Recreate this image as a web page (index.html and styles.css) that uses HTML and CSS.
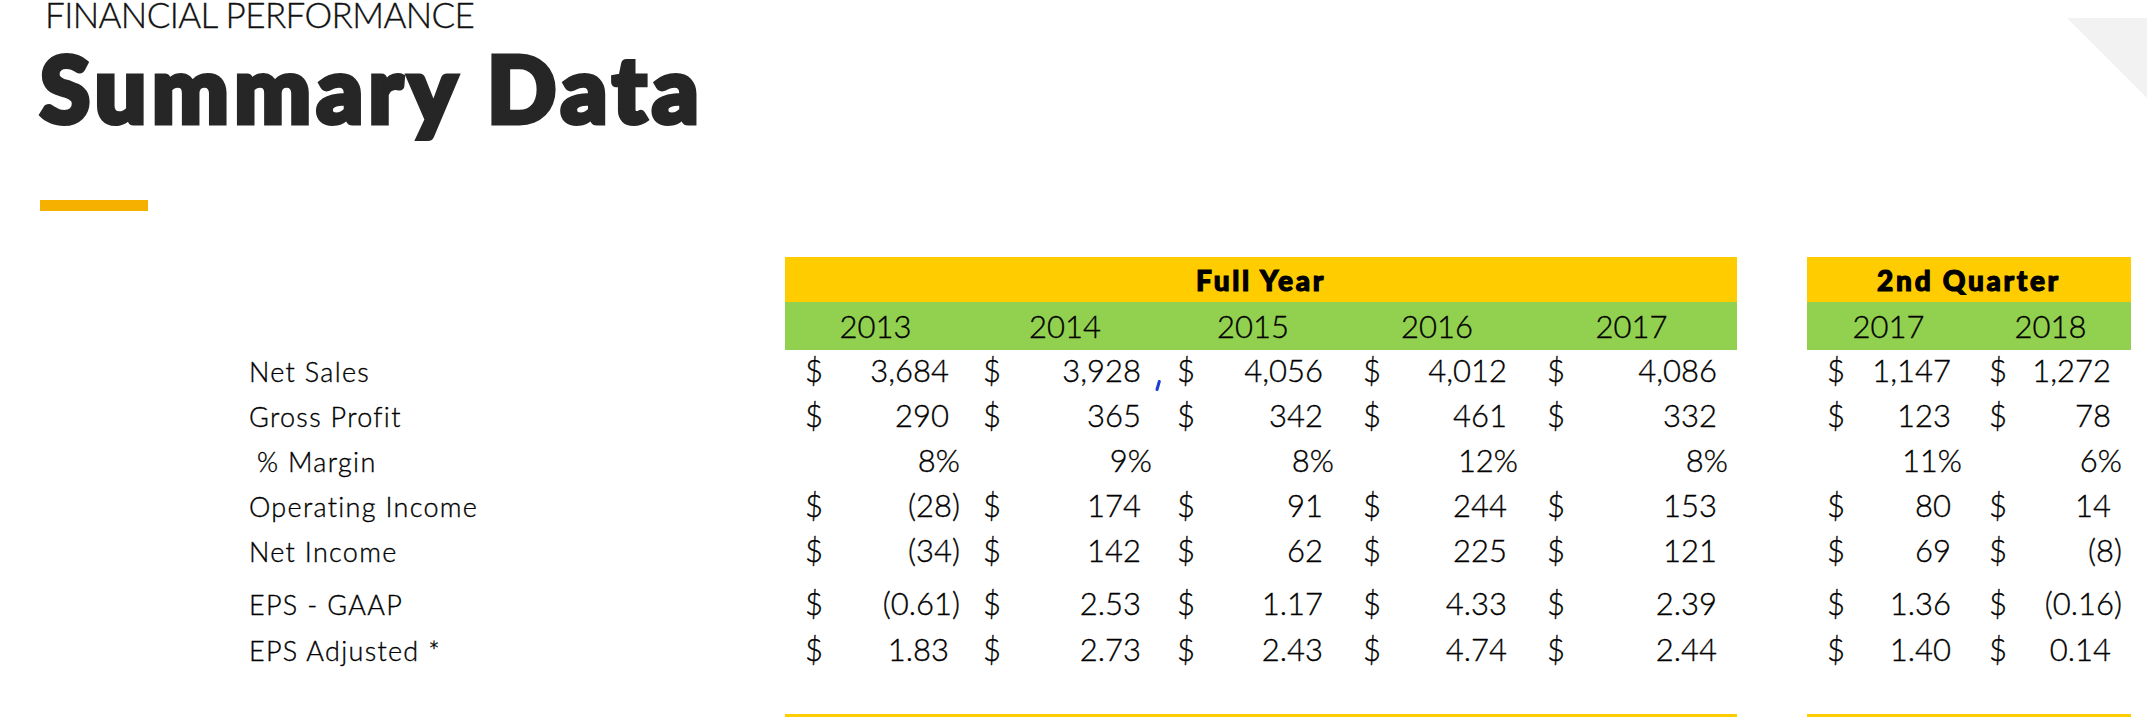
FILE: index.html
```html
<!DOCTYPE html>
<html lang="en">
<head>
<meta charset="utf-8">
<title>Summary Data</title>
<link rel="stylesheet" href="styles.css">
</head>
<body>
<div class="slide">
  <svg class="corner" viewBox="0 0 80 80" aria-hidden="true"><polygon points="0,0 80,0 80,80" fill="#f2f2f2"/></svg>
  <header class="head">
    <div class="kicker">FINANCIAL PERFORMANCE</div>
    <h1 class="title">Summary Data</h1>
    <div class="accent"></div>
  </header>

  <div class="table">
    <div class="labels">
      <div class="lab">Net Sales</div>
      <div class="lab">Gross Profit</div>
      <div class="lab indent">% Margin</div>
      <div class="lab">Operating Income</div>
      <div class="lab">Net Income</div>
      <div class="lab r6">EPS - GAAP</div>
      <div class="lab r7">EPS Adjusted *</div>
    </div>

    <div class="sec full">
      <div class="band-y">Full Year</div>
      <div class="band-g grid">
        <div class="yr">2013</div><div class="yr">2014</div><div class="yr">2015</div><div class="yr">2016</div><div class="yr">2017</div>
      </div>
      <div class="row grid">
        <div class="cell"><span>$</span><span class="pos">3,684</span></div>
        <div class="cell mark-host"><span>$</span><span class="pos">3,928</span><svg class="mark" viewBox="0 0 6 11" aria-hidden="true"><path d="M4.3 1.5 L2 9.5" stroke="#1d3fd6" stroke-width="3" stroke-linecap="round" fill="none"/></svg></div>
        <div class="cell"><span>$</span><span class="pos">4,056</span></div>
        <div class="cell"><span>$</span><span class="pos">4,012</span></div>
        <div class="cell"><span>$</span><span class="pos">4,086</span></div>
      </div>
      <div class="row grid">
        <div class="cell"><span>$</span><span class="pos">290</span></div>
        <div class="cell"><span>$</span><span class="pos">365</span></div>
        <div class="cell"><span>$</span><span class="pos">342</span></div>
        <div class="cell"><span>$</span><span class="pos">461</span></div>
        <div class="cell"><span>$</span><span class="pos">332</span></div>
      </div>
      <div class="row grid">
        <div class="cell pct"><span>8%</span></div>
        <div class="cell pct"><span>9%</span></div>
        <div class="cell pct"><span>8%</span></div>
        <div class="cell pct"><span>12%</span></div>
        <div class="cell pct"><span>8%</span></div>
      </div>
      <div class="row grid">
        <div class="cell"><span>$</span><span>(28)</span></div>
        <div class="cell"><span>$</span><span class="pos">174</span></div>
        <div class="cell"><span>$</span><span class="pos">91</span></div>
        <div class="cell"><span>$</span><span class="pos">244</span></div>
        <div class="cell"><span>$</span><span class="pos">153</span></div>
      </div>
      <div class="row grid">
        <div class="cell"><span>$</span><span>(34)</span></div>
        <div class="cell"><span>$</span><span class="pos">142</span></div>
        <div class="cell"><span>$</span><span class="pos">62</span></div>
        <div class="cell"><span>$</span><span class="pos">225</span></div>
        <div class="cell"><span>$</span><span class="pos">121</span></div>
      </div>
      <div class="row grid r6">
        <div class="cell"><span>$</span><span>(0.61)</span></div>
        <div class="cell"><span>$</span><span class="pos">2.53</span></div>
        <div class="cell"><span>$</span><span class="pos">1.17</span></div>
        <div class="cell"><span>$</span><span class="pos">4.33</span></div>
        <div class="cell"><span>$</span><span class="pos">2.39</span></div>
      </div>
      <div class="row grid r7">
        <div class="cell"><span>$</span><span class="pos">1.83</span></div>
        <div class="cell"><span>$</span><span class="pos">2.73</span></div>
        <div class="cell"><span>$</span><span class="pos">2.43</span></div>
        <div class="cell"><span>$</span><span class="pos">4.74</span></div>
        <div class="cell"><span>$</span><span class="pos">2.44</span></div>
      </div>
      <div class="foot"></div>
    </div>

    <div class="sec qtr">
      <div class="band-y">2nd Quarter</div>
      <div class="band-g grid">
        <div class="yr">2017</div><div class="yr">2018</div>
      </div>
      <div class="row grid">
        <div class="cell"><span>$</span><span class="pos">1,147</span></div>
        <div class="cell"><span>$</span><span class="pos">1,272</span></div>
      </div>
      <div class="row grid">
        <div class="cell"><span>$</span><span class="pos">123</span></div>
        <div class="cell"><span>$</span><span class="pos">78</span></div>
      </div>
      <div class="row grid">
        <div class="cell pct"><span>11%</span></div>
        <div class="cell pct"><span>6%</span></div>
      </div>
      <div class="row grid">
        <div class="cell"><span>$</span><span class="pos">80</span></div>
        <div class="cell"><span>$</span><span class="pos">14</span></div>
      </div>
      <div class="row grid">
        <div class="cell"><span>$</span><span class="pos">69</span></div>
        <div class="cell"><span>$</span><span>(8)</span></div>
      </div>
      <div class="row grid r6">
        <div class="cell"><span>$</span><span class="pos">1.36</span></div>
        <div class="cell"><span>$</span><span>(0.16)</span></div>
      </div>
      <div class="row grid r7">
        <div class="cell"><span>$</span><span class="pos">1.40</span></div>
        <div class="cell"><span>$</span><span class="pos">0.14</span></div>
      </div>
      <div class="foot"></div>
    </div>
  </div>
</div>
</body>
</html>
```

FILE: styles.css
```css
html, body {
  margin: 0;
  padding: 0;
  background: #ffffff;
}

.slide {
  position: relative;
  width: 2147px;
  height: 717px;
  overflow: hidden;
  font-family: Lato, "Open Sans", "Liberation Sans", sans-serif;
  color: #000000;
}

.corner {
  position: absolute;
  top: 18px;
  right: 0;
  width: 80px;
  height: 80px;
}

.kicker {
  padding-left: 45px;
  font-size: 35px;
  line-height: 29px;
  height: 29px;
  font-weight: 300;
  letter-spacing: -0.6px;
  color: #111111;
  -webkit-text-stroke: 0.35px #111111;
}

.title {
  margin: 0;
  padding-left: 40px;
  font-size: 91px;
  line-height: 117px;
  height: 117px;
  font-weight: 900;
  letter-spacing: 5.5px;
  color: #262626;
  -webkit-text-stroke: 5px #262626;
}

.accent {
  margin: 54px 0 0 40px;
  width: 108px;
  height: 11px;
  background: #f6b100;
}

.table {
  display: flex;
  margin-top: 46px;
}

.labels {
  width: 785px;
  box-sizing: border-box;
  padding-left: 249px;
  padding-top: 93px;
  font-size: 27px;
  letter-spacing: 1.3px;
  font-weight: 300;
  -webkit-text-stroke: 0.35px #000000;
}

.lab {
  height: 45px;
  line-height: 43px;
  white-space: pre;
}

.lab.indent {
  padding-left: 8px;
}

.r6 {
  margin-top: 8px;
}

.r7 {
  margin-top: 1px;
}

.sec.full {
  width: 952px;
}

.sec.qtr {
  width: 324px;
  margin-left: 70px;
}

.band-y {
  height: 45px;
  box-sizing: border-box;
  padding-top: 2px;
  line-height: 43px;
  background: #ffcc00;
  text-align: center;
  font-size: 28px;
  font-weight: 900;
  letter-spacing: 2.7px;
  -webkit-text-stroke: 1.2px #000000;
}

.grid {
  display: grid;
}

.full .grid {
  grid-template-columns: 187px 192px 184px 184px 205px;
}

.qtr .grid {
  grid-template-columns: 169px 155px;
}

.band-g {
  height: 48px;
  line-height: 48px;
  background: #92d050;
  font-size: 31px;
  font-weight: 300;
  -webkit-text-stroke: 0.35px #000000;
}

.yr {
  text-align: center;
  padding-right: 6px;
}

.row {
  height: 45px;
  line-height: 40px;
  font-size: 31px;
  font-weight: 300;
  -webkit-text-stroke: 0.35px #000000;
}

.cell {
  display: flex;
  justify-content: space-between;
}

.cell.pct {
  justify-content: flex-end;
}

.full .cell:nth-child(1) { padding: 0 12px 0 20px; }
.full .cell:nth-child(2) { padding: 0 12px 0 11px; }
.full .cell:nth-child(3) { padding: 0 14px 0 13px; }
.full .cell:nth-child(4) { padding: 0 14px 0 15px; }
.full .cell:nth-child(5) { padding: 0 9px 0 15px; }
.qtr .cell:nth-child(1) { padding: 0 14px 0 20px; }
.qtr .cell:nth-child(2) { padding: 0 9px 0 13px; }

.pos {
  padding-right: 11px;
}

.mark-host {
  position: relative;
}

.mark {
  position: absolute;
  right: 3px;
  top: 30px;
  width: 6px;
  height: 11px;
}

.foot {
  margin-top: 40px;
  height: 6px;
  background: #ffcc00;
}
```
